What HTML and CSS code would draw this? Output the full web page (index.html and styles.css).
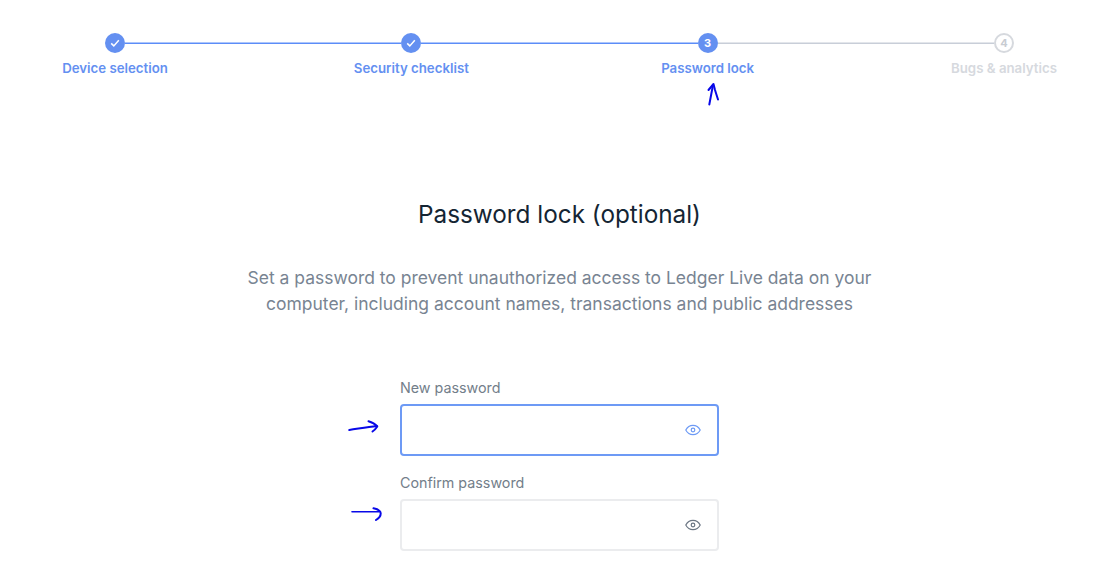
FILE: index.html
```html
<!DOCTYPE html>
<html lang="en">
<head>
  <meta charset="UTF-8">
  <title>Password lock</title>
  <link rel="stylesheet" href="styles.css">
</head>
<body>

<div class="stepper">
  <div class="track">
    <span class="dot done">
      <svg width="12" height="12" viewBox="0 0 12 12"><path d="M2.2 6.4l2.6 2.5 5-5.6" fill="none" stroke="#fff" stroke-width="1.5"/></svg>
    </span>
    <span class="line active"></span>
    <span class="dot done">
      <svg width="12" height="12" viewBox="0 0 12 12"><path d="M2.2 6.4l2.6 2.5 5-5.6" fill="none" stroke="#fff" stroke-width="1.5"/></svg>
    </span>
    <span class="line active"></span>
    <span class="dot current">3</span>
    <span class="line"></span>
    <span class="dot todo">4</span>
  </div>
  <div class="labels">
    <span class="label">Device selection</span>
    <span class="label">Security checklist</span>
    <span class="label">Password lock</span>
    <span class="label muted">Bugs &amp; analytics</span>
  </div>
</div>

<main class="content">
  <h1>Password lock (optional)</h1>
  <p class="intro">Set a password to prevent unauthorized access to Ledger Live data on your computer, including account names, transactions and public addresses</p>

  <div class="form">
    <label class="field-label">New password</label>
    <div class="input focused">
      <svg class="eye" width="16" height="16" viewBox="0 0 16 16"><path d="M.8 8C2.400 4.900 4.900 3.300 8 3.300s5.600 1.600 7.200 4.700c-1.600 3.100-4.100 4.700-7.200 4.700S2.400 11.100.8 8z" fill="none" stroke="currentColor" stroke-width="1.200"/><circle cx="8" cy="8" r="1.800" fill="none" stroke="currentColor" stroke-width="1.200"/></svg>
    </div>
    <label class="field-label">Confirm password</label>
    <div class="input">
      <svg class="eye" width="16" height="16" viewBox="0 0 16 16"><path d="M.8 8C2.400 4.900 4.900 3.300 8 3.300s5.600 1.600 7.200 4.700c-1.600 3.100-4.100 4.700-7.200 4.700S2.400 11.100.8 8z" fill="none" stroke="currentColor" stroke-width="1.200"/><circle cx="8" cy="8" r="1.800" fill="none" stroke="currentColor" stroke-width="1.200"/></svg>
    </div>
  </div>
</main>

<!-- hand drawn arrows on top of the screenshot -->
<svg class="scribbles" width="1096" height="572" viewBox="0 0 1096 572">
  <g fill="none" stroke="#0808e8" stroke-width="2" stroke-linecap="round" stroke-linejoin="round">
    <path d="M709.300 104.500L713 85"/>
    <path d="M708.500 90l5-6 1.500 6 3 9.500"/>
    <path d="M349.300 430c9-1.300 18-3 27.500-4"/>
    <path d="M368.500 421.300c4 1 7 3 8.800 5.200-1.300 2-2.800 3.700-4.800 5"/>
    <path d="M352 511.700h27" stroke-width="1.600"/>
    <path d="M373.500 508.300c4 .8 7 2.700 7.200 5 .1 2.700-1.800 5-4.700 6.700"/>
  </g>
</svg>

</body>
</html>
```

FILE: styles.css
```css
html, body { height: 100%; }
body { margin: 0; background: #fff; font-family: Inter, "Liberation Sans", sans-serif; color: #142533; overflow: hidden; position: relative; }

.stepper { padding-top: 33px; }
.track { display: flex; align-items: center; margin: 0 82px 0 105px; }
.dot { width: 20px; height: 20px; border-radius: 50%; flex: none; display: flex; align-items: center; justify-content: center; box-sizing: border-box; font-size: 11px; font-weight: 700; }
.done, .current { background: #6490f1; color: #fff; }
.todo { border: 2px solid #d6d9de; color: #c8ccd2; background: #fff; }
.line { flex: 1; height: 1px; background: #c8ced8; box-shadow: 0 -1px 0 rgba(200,206,216,.5); }
.line.active { background: #5c8df8; box-shadow: 0 -1px 0 rgba(92,141,248,.5); }

.labels { display: flex; justify-content: space-between; margin: 7px 32px 0 55px; }
.label { width: 120px; flex: none; text-align: center; white-space: nowrap; font-size: 13.250px; line-height: 16px; font-weight: 600; color: #6490f1; }
.label.muted { color: #d6d9de; }

.content { display: flex; flex-direction: column; align-items: center; padding-left: 23px; }
h1 { margin: 122px 0 0; font-size: 24.300px; line-height: 32px; font-weight: 400; color: #142533; }
.intro { width: 660px; margin: 35px 0 0; text-align: center; font-size: 17.480px; line-height: 26px; color: #788492; }

.form { width: 319px; margin-top: 62px; }
.field-label { display: block; font-size: 14.300px; line-height: 18px; color: #737e8a; margin-bottom: 7px; }
.input { height: 52px; box-sizing: border-box; border: 2px solid #ebecee; border-radius: 4px; margin-bottom: 18px; display: flex; align-items: center; justify-content: flex-end; padding-right: 16px; color: #6b7683; }
.input.focused { border-color: #6d9af5; color: #6d9af5; }

.scribbles { position: absolute; left: 0; top: 0; pointer-events: none; }
```
